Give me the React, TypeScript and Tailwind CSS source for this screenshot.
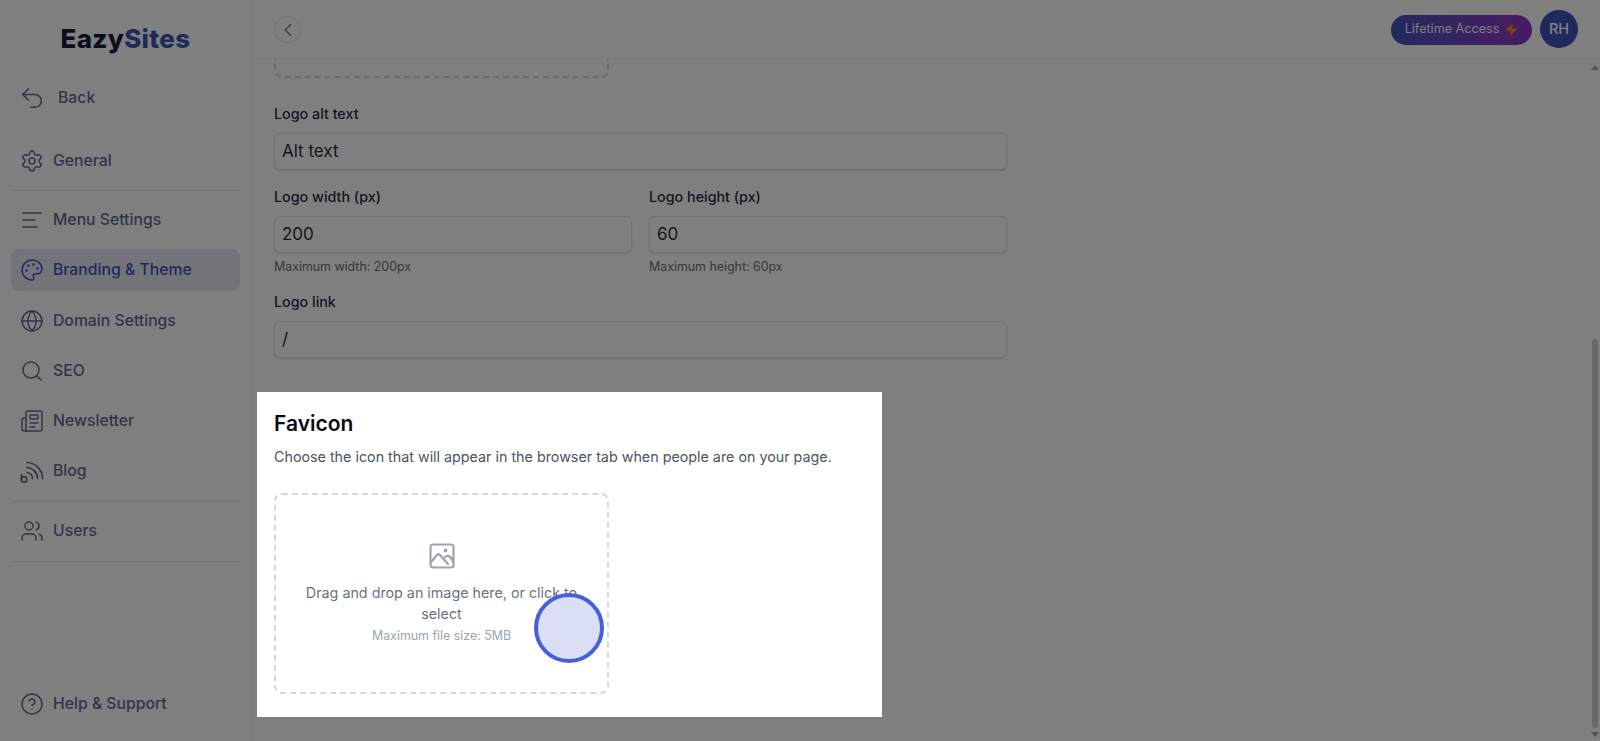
import { AlignLeft, ChevronLeft, CircleHelp, Globe, Newspaper, Palette, Search, Settings, Undo2, Users, Zap } from 'lucide-react';
import type { ReactNode } from 'react';

function BlogIcon({ className }: { className?: string }) {
  return (
    <svg viewBox="0 0 24 24" fill="none" stroke="currentColor" strokeWidth="1.7" strokeLinecap="round" strokeLinejoin="round" className={className}>
      <path d="M1.5 15.500v6" />
      <circle cx="4.2" cy="20.400" r="2.700" />
      <path d="M7 13.500a6 6 0 0 1 5.500 6" />
      <path d="M7 8.500a11 11 0 0 1 10.500 11" />
      <path d="M7 3.500a16 16 0 0 1 15.500 16" />
    </svg>
  );
}

function NavItem({ icon, label, active }: { icon: ReactNode; label: string; active?: boolean }) {
  return (
    <div className={`flex h-[42px] items-center gap-[11px] rounded-lg px-[11px] text-[15.75px] font-medium ${active ? 'bg-[#e6e9f5] text-[#4053b8]' : 'text-[#666a88]'}`}>
      <span className="flex w-[20px] justify-center">{icon}</span>
      {label}
    </div>
  );
}

function Field({ label, value, hint }: { label: string; value: string; hint?: string }) {
  return (
    <div className="min-w-0 flex-1">
      <div className="text-[14.3px] leading-5 font-medium text-[#2a2d44]">{label}</div>
      <div className="mt-[9px] flex h-[37px] items-center rounded-md border border-[#e5e7eb] bg-white px-[7px] text-[17px] text-[#2a2d44] shadow-sm">{value}</div>
      {hint && <div className="mt-[6px] text-[12.4px] leading-4 text-[#6b7280]">{hint}</div>}
    </div>
  );
}

export default function App() {
  const iconClass = 'h-[24px] w-[24px] shrink-0 stroke-[1.5]';
  return (
    <div className="relative flex h-[741px] w-full overflow-hidden bg-white font-['Inter',sans-serif]">
      <aside className="flex w-[252px] shrink-0 flex-col border-r border-[#f3f4f6] px-[11px]">
        <div className="flex h-[58px] items-center justify-center pt-[18px] text-[26px] font-extrabold tracking-[0.3px]">
          <span className="text-[#1a1d3a]">Eazy</span>
          <span className="text-[#4053b8]">Sites</span>
        </div>
        <div className="mt-[19px] flex h-[42px] items-center gap-[12px] px-[7px] text-[15.75px] font-medium text-[#666a88]">
          <Undo2 className="h-[28px] w-[28px] shrink-0 stroke-[1.3]" />
          Back
        </div>
        <div className="mt-[21px]">
          <NavItem icon={<Settings className={iconClass} />} label="General" />
        </div>
        <div className="my-[8px] border-t border-[#e5e7eb]" />
        <div className="flex flex-col gap-[8.25px]">
          <NavItem icon={<AlignLeft className={iconClass} />} label="Menu Settings" />
          <NavItem active icon={<Palette className={iconClass} />} label="Branding & Theme" />
          <NavItem icon={<Globe className={iconClass} />} label="Domain Settings" />
          <NavItem icon={<Search className={iconClass} />} label="SEO" />
          <NavItem icon={<Newspaper className={iconClass} />} label="Newsletter" />
          <NavItem icon={<BlogIcon className="h-[24px] w-[24px] shrink-0" />} label="Blog" />
        </div>
        <div className="my-[8.5px] border-t border-[#e5e7eb]" />
        <NavItem icon={<Users className={iconClass} />} label="Users" />
        <div className="my-[8.5px] border-t border-[#e5e7eb]" />
        <div className="mt-auto mb-[16px]">
          <NavItem icon={<CircleHelp className={iconClass} />} label="Help & Support" />
        </div>
      </aside>

      <div className="flex min-w-0 flex-1 flex-col">
        <header className="flex h-[59px] shrink-0 items-center justify-between border-b border-[#f3f4f6] px-[22px]">
          <button className="mt-[1px] flex h-[27px] w-[27px] items-center justify-center rounded-full border border-[#e5e7eb] text-[#6b7280]">
            <ChevronLeft className="h-[22px] w-[22px] stroke-[1.2]" />
          </button>
          <div className="flex items-center gap-[8px]">
            <div className="mt-[1px] flex h-[30px] w-[141px] items-center justify-center gap-[6px] rounded-full bg-gradient-to-r from-[#4053b8] to-[#9333c8] text-[12.6px] font-normal text-[#f5f5ff]">
              Lifetime Access
              <Zap className="h-[13px] w-[13px] fill-[#f59e0b] stroke-[#ef6c2f]" />
            </div>
            <div className="flex h-[38px] w-[38px] items-center justify-center rounded-full bg-[#4053b8] text-[14.5px] font-medium text-white">RH</div>
          </div>
        </header>

        <main className="min-h-0 flex-1 overflow-hidden pl-[22px]">
          <div className="w-[733px]">
            <div className="h-[19px] w-[335px] rounded-b-lg border-2 border-t-0 border-dashed border-[#d5d8de]" />
            <div className="mt-[26px]">
              <Field label="Logo alt text" value="Alt text" />
            </div>
            <div className="mt-[17px] flex gap-[17px]">
              <Field label="Logo width (px)" value="200" hint="Maximum width: 200px" />
              <Field label="Logo height (px)" value="60" hint="Maximum height: 60px" />
            </div>
            <div className="mt-[17px]">
              <Field label="Logo link" value="/" />
            </div>

            <h2 className="mt-[52px] text-[21px] leading-7 font-semibold text-[#0a0a14]">Favicon</h2>
            <p className="mt-[9px] text-[14.3px] leading-5 text-[#4b5563]">Choose the icon that will appear in the browser tab when people are on your page.</p>
            <div className="mt-[26px] flex h-[201px] w-[335px] flex-col items-center justify-center rounded-lg border-2 border-dashed border-[#d5d8de] px-6 text-center">
              <svg viewBox="0 0 26 26" fill="none" stroke="#9ca3af" strokeWidth="2.2" strokeLinecap="round" strokeLinejoin="round" className="h-[26px] w-[26px]">
                <rect x="1.5" y="1.5" width="23" height="23" rx="2.5" />
                <circle cx="16.5" cy="7.5" r="0.8" fill="#9ca3af" />
                <path d="M2 19l6-7c1-1 2-1 3 0l8 9" />
                <path d="M16 14c1.500-1.500 3-1.500 4.500-.5 2 1.500 3 3.500 3.500 5.500" />
              </svg>
              <p className="mt-[13px] text-[14.3px] leading-[21px] text-[#6b7280]">Drag and drop an image here, or click to select</p>
              <p className="mt-[4px] text-[12.4px] leading-4 text-[#9ca3af]">Maximum file size: 5MB</p>
            </div>
          </div>
        </main>
      </div>

      {/* scrollbar */}
      <div className="pointer-events-none absolute top-[65px] right-[2px] bottom-[4px] flex w-[6px] flex-col items-center justify-between">
        <div className="h-0 w-0 border-x-[4px] border-b-[5px] border-x-transparent border-b-[#a8a8a8]" />
        <div className="mt-auto mb-[4px] h-[389px] w-[6px] rounded-full bg-[#d2d2d2]" />
        <div className="h-0 w-0 border-x-[4px] border-t-[5px] border-x-transparent border-t-[#a8a8a8]" />
      </div>

      {/* tour spotlight */}
      <div className="absolute top-[392px] left-[257px] h-[325px] w-[625px] shadow-[0_0_0_2000px_rgba(0,0,0,0.5)]" />
      <div className="absolute top-[593px] left-[534px] h-[70px] w-[70px] rounded-full border-[4px] border-[#4460dc] bg-[#dadff5]" />
    </div>
  );
}
